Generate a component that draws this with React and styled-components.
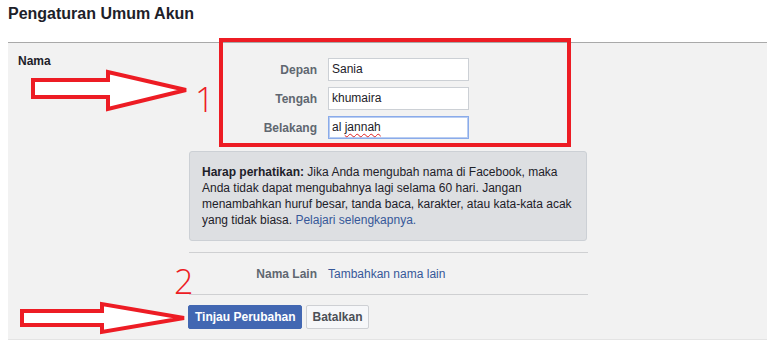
import React from "react";
import styled, { createGlobalStyle } from "styled-components";

const Global = createGlobalStyle`
  html, body { margin: 0; padding: 0; background: #fff; }
  body { font-family: "Liberation Sans", Arial, Helvetica, sans-serif; }
`;

const Page = styled.div`
  position: relative;
  width: 773px;
  height: 347px;
  padding-left: 8px;
  box-sizing: border-box;
  overflow: hidden;
`;

const Title = styled.h2`
  margin: 4px 0 0;
  font-size: 16px;
  line-height: 20px;
  font-weight: bold;
  color: #1d2129;
`;

const Panel = styled.section`
  margin-top: 18px;
  width: 759px;
  box-sizing: border-box;
  background: #f2f2f2;
  border-top: 1px solid #a9a9a9;
  border-bottom: 1px solid #e4e4e4;
  display: grid;
  grid-template-columns: 171px 398px;
  padding: 10px 0 10px 10px;
`;

const SectionLabel = styled.div`
  font-size: 12px;
  line-height: 16px;
  font-weight: bold;
  color: #1d2129;
`;

const Content = styled.div`
  display: flex;
  flex-direction: column;
  padding-top: 5px;
`;

const Fields = styled.div`
  display: flex;
  flex-direction: column;
  gap: 6px;
`;

const Row = styled.div`
  display: grid;
  grid-template-columns: 128px auto;
  column-gap: 11px;
  align-items: center;
  height: ${(p) => (p.$tall ? "41px" : "auto")};
`;

const Label = styled.div`
  text-align: right;
  font-size: 12px;
  font-weight: bold;
  color: #606770;
`;

const Field = styled.div`
  width: 141px;
  height: 23px;
  box-sizing: border-box;
  background: #fff;
  border: 1px solid ${(p) => (p.$focused ? "#8aabea" : "#ccd0d5")};
  box-shadow: ${(p) => (p.$focused ? "inset 0 0 0 1px #b9cdf2" : "none")};
  padding: 0 3px;
  font-size: 12px;
  line-height: 21px;
  color: #1d2129;
  white-space: nowrap;
`;

const Misspelled = styled.span`
  text-decoration: underline wavy #e02020;
  text-decoration-thickness: 1px;
  text-underline-offset: 2px;
`;

const Notice = styled.div`
  margin-top: 12px;
  background: #dddfe2;
  border: 1px solid #ccd0d5;
  border-radius: 3px;
  padding: 12px 12px;
  font-size: 12px;
  line-height: 16px;
  color: #1d2129;
`;

const Link = styled.a`
  color: #365899;
  text-decoration: none;
`;

const Divider = styled.hr`
  margin: ${(p) => p.$mt || 0}px 0 0;
  width: 399px;
  border: 0;
  border-top: 1px solid #cfd0d2;
  height: 0;
`;

const Value = styled.div`
  font-size: 12px;
  color: #365899;
`;

const Actions = styled.div`
  display: flex;
  gap: 4px;
  margin-top: 10px;
  margin-left: -1px;
`;

const Button = styled.button`
  height: 24px;
  box-sizing: border-box;
  padding: 0 ${(p) => (p.$primary ? 6 : 5)}px;
  border-radius: 2px;
  font-family: "Liberation Sans", Arial, sans-serif;
  font-size: 12px;
  font-weight: bold;
  border: 1px solid ${(p) => (p.$primary ? "#4267b2" : "#ced0d4")};
  background: ${(p) => (p.$primary ? "#4267b2" : "#f6f7f9")};
  color: ${(p) => (p.$primary ? "#fff" : "#4b4f56")};
`;

const Overlay = styled.svg`
  position: absolute;
  left: 0;
  top: 0;
  width: 773px;
  height: 347px;
  pointer-events: none;
`;

const HighlightBox = styled.div`
  position: absolute;
  left: 219px;
  top: 38px;
  width: 352px;
  height: 109px;
  box-sizing: border-box;
  border: 4px solid #ed1c24;
  pointer-events: none;
`;

const Step = styled.span`
  position: absolute;
  left: ${(p) => p.$x}px;
  top: ${(p) => p.$y}px;
  font-family: "Open Sans", "Liberation Sans", sans-serif;
  font-weight: 300;
  font-size: 34px;
  line-height: 34px;
  color: #ed1c24;
`;

export default function App() {
  return (
    <Page>
      <Global />
      <Title>Pengaturan Umum Akun</Title>
      <Panel>
        <SectionLabel>Nama</SectionLabel>
        <Content>
          <Fields>
            <Row>
              <Label>Depan</Label>
              <Field>Sania</Field>
            </Row>
            <Row>
              <Label>Tengah</Label>
              <Field>khumaira</Field>
            </Row>
            <Row>
              <Label>Belakang</Label>
              <Field $focused>
                al <Misspelled>jannah</Misspelled>
              </Field>
            </Row>
          </Fields>
          <Notice>
            <b>Harap perhatikan:</b> Jika Anda mengubah nama di Facebook, maka
            Anda tidak dapat mengubahnya lagi selama 60 hari. Jangan
            menambahkan huruf besar, tanda baca, karakter, atau kata-kata acak
            yang tidak biasa. <Link href="#">Pelajari selengkapnya.</Link>
          </Notice>
          <Divider $mt={11} />
          <Row $tall>
            <Label>Nama Lain</Label>
            <Value>Tambahkan nama lain</Value>
          </Row>
          <Divider />
          <Actions>
            <Button $primary>Tinjau Perubahan</Button>
            <Button>Batalkan</Button>
          </Actions>
        </Content>
      </Panel>

      <HighlightBox />
      <Step $x={195} $y={82}>1</Step>
      <Step $x={174} $y={264}>2</Step>
      <Overlay viewBox="0 0 773 347">
        <polygon
          points="33,80 108,80 108,72 186,90 108,109 108,97 33,97"
          fill="#fff"
          stroke="#ed1c24"
          strokeWidth="4"
          strokeLinejoin="miter"
        />
        <polygon
          points="22,311 102,311 102,304 184,318 102,332 102,325 22,325"
          fill="#fff"
          stroke="#ed1c24"
          strokeWidth="4"
          strokeLinejoin="miter"
        />
      </Overlay>
    </Page>
  );
}
